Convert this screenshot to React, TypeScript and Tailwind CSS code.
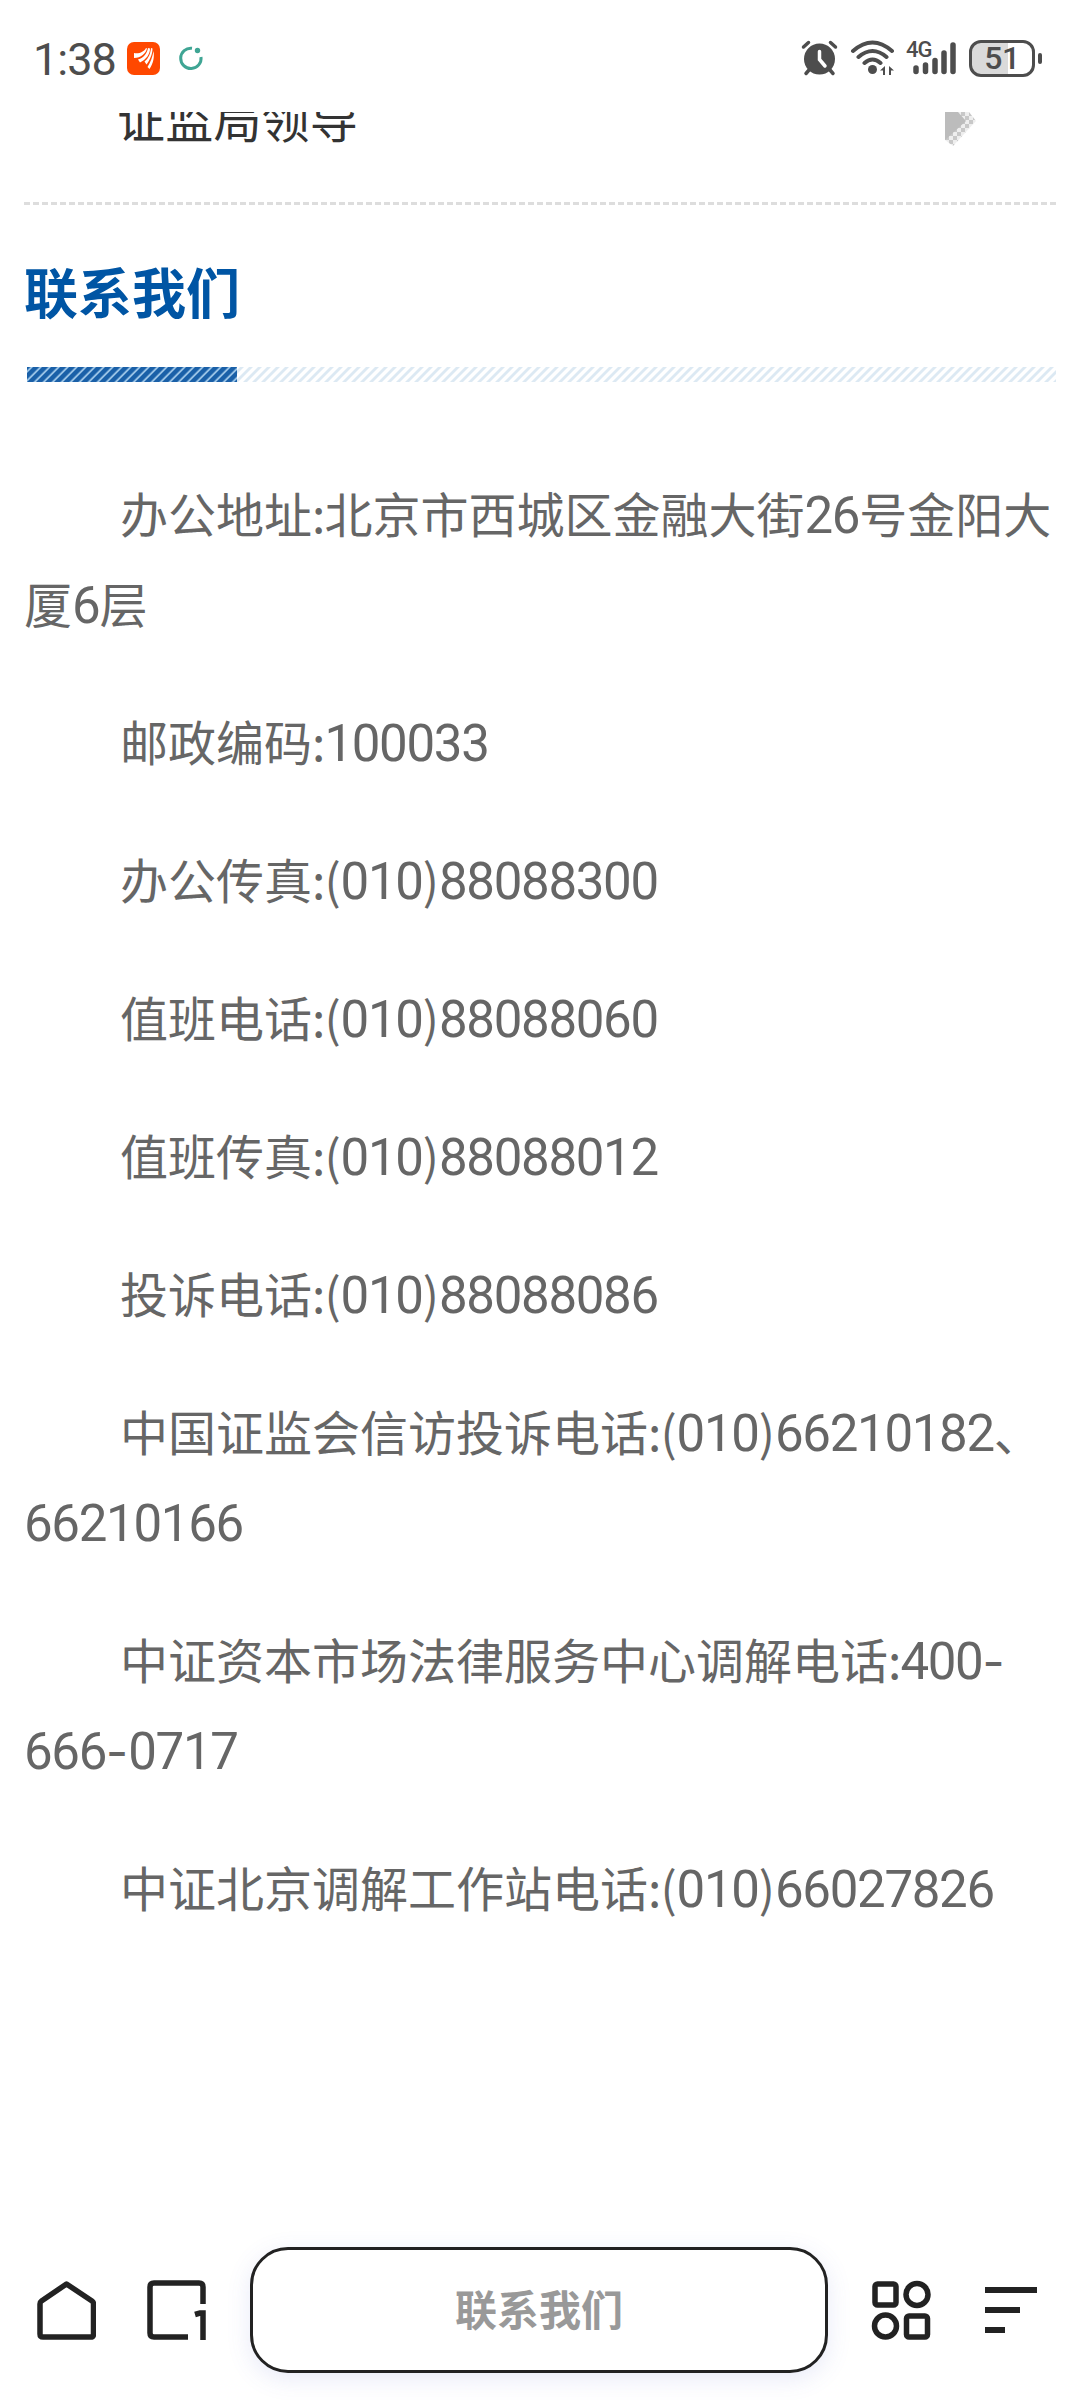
import React from "react";

const CONTACTS = [
  ["办公地址:北京市西城区金融大街26号金阳大", "厦6层"],
  ["邮政编码:100033"],
  ["办公传真:(010)88088300"],
  ["值班电话:(010)88088060"],
  ["值班传真:(010)88088012"],
  ["投诉电话:(010)88088086"],
  ["中国证监会信访投诉电话:(010)66210182、", "66210166"],
  ["中证资本市场法律服务中心调解电话:400-", "666-0717"],
  ["中证北京调解工作站电话:(010)66027826"],
];

// Digits are set in Roboto, slightly larger than the Chinese text around them
const MixedText: React.FC<{ text: string }> = ({ text }) => (
  <>
    {text.split(/([0-9]+|[-:])/).map((part, i) => {
      if (part === "-") {
        return (
          <span key={i} className="font-[Inter] leading-none">
            -
          </span>
        );
      }
      if (part === ":") {
        return (
          <span key={i} className="tracking-[-1px]">
            :
          </span>
        );
      }
      return /^[0-9]+$/.test(part) ? (
        <span key={i} className="font-[Roboto] text-[51px] leading-none tracking-[-1.3px]">
          {part}
        </span>
      ) : (
        part
      );
    })}
  </>
);

const StatusBar: React.FC = () => (
  <header className="relative z-10 flex h-28 items-center justify-between bg-white pl-[33px] pr-[38px] pt-1">
    <div className="flex items-center">
      <span className="w-[94px] pt-0.5 font-[Roboto] text-[45px] leading-none tracking-[-1px] text-[#4d4d4d]">1:38</span>
      <svg className="h-[33px] w-[33px]" viewBox="0 0 33 33">
        <rect width="33" height="33" rx="7" fill="#ff4800" />
        <path
          fill="#fff"
          d="M7 11c5 1 10-1 12-5l1 .5C19 11 14 16 7 16zM21 6l2 .5c0 6-4 11-10 14l-2-3c6-2 9-6 10-11.500zM24 6l1.500.500c0 6-3 12-6 16l-2-3c4-3 6-8 6.500-13.500zM26.500 9c1 6 0 12-4 18l-2-2c3-5 5-10 6-16z"
        />
      </svg>
      <svg className="ml-[18px] h-[26px] w-[26px]" viewBox="0 0 26 26">
        <path d="M14 3.200A10.200 10.200 0 1 0 23 12" fill="none" stroke="#3fa594" strokeWidth="3" />
        <circle cx="19.500" cy="5.500" r="2.700" fill="#3fa594" />
      </svg>
    </div>
    <div className="flex items-center text-[#4d4d4d]">
      <svg className="h-[36px] w-[37px]" viewBox="0 0 37 36" stroke="currentColor" fill="none" strokeLinecap="round">
        <circle cx="18.500" cy="19" r="15.500" fill="currentColor" stroke="none" />
        <path strokeWidth="3.500" d="M2.500 7l5-4.500M29.500 2.500l5 4.500M8 30l-3 3.500M29 30l3 3.500" />
        <path stroke="#fff" strokeWidth="3.500" d="M18.500 11.500v8l5.500 6.500" />
      </svg>
      <svg className="ml-3 h-[36px] w-[45px]" viewBox="0 0 45 36" stroke="currentColor" fill="none" strokeLinecap="round">
        <path strokeWidth="4" d="M3 11Q22.500-6 42 11M8.500 17Q22.500 5 36.500 17M14.500 23Q22.500 16 30.500 23" />
        <circle cx="22.500" cy="29.500" r="4.500" fill="currentColor" stroke="none" />
        <path d="M30 30.500l5-4.500v9h-2v-4.500zM44 30.500l-5-4.500v9h2v-4.500z" fill="currentColor" stroke="none" />
      </svg>
      <div className="relative ml-[11px] h-9 w-[52px]">
        <span className="absolute left-0 top-[-1px] font-[Roboto] text-[22px] font-medium leading-none tracking-[-1px]">4G</span>
        <svg className="h-9 w-[52px]" viewBox="0 0 52 36" stroke="currentColor" strokeWidth="5.500" strokeLinecap="round">
          <path d="M10 28v3.500M19.500 25v6.500M29 20.500v11M38 13v18.500M47 5v26.500" />
        </svg>
      </div>
      <div className="ml-[11px] flex items-center gap-[3px]">
        <div className="flex h-[37px] w-[66px] items-center justify-center rounded-[12px] border-[3px] border-[#4d4d4d] bg-linear-to-r from-[#dadada] from-60% to-white to-60%">
          <span className="font-[Roboto] text-[32px] font-medium leading-none tracking-[-0.5px]">51</span>
        </div>
        <div className="h-[11px] w-1 rounded-full bg-[#4d4d4d]" />
      </div>
    </div>
  </header>
);

const LeaderRow: React.FC = () => (
  <div className="mx-6 flex h-[90px] items-start justify-between overflow-hidden pl-[93px] pr-[80px]">
    <span className="mt-[-21px] text-[48px] leading-[52px] tracking-[0.2px] text-[#333]">证监局领导</span>
    <svg className="h-[34px] w-[31px]" viewBox="0 0 31 34">
      <defs>
        <pattern id="dots" width="8" height="8" patternUnits="userSpaceOnUse">
          <path d="M0 0h8v8H0z" fill="#eee" />
          <path d="M0 0h4v4H0zM4 4h4v4H4z" fill="#c8c8c8" />
        </pattern>
      </defs>
      <path d="M0 0h24l7 9L8 34 0 28z" fill="url(#dots)" />
      <path d="M0 0h13l8 9L0 28z" fill="#bcbcbc" />
    </svg>
  </div>
);

const SectionTitle: React.FC = () => (
  <>
    <svg className="mx-6 h-[3px] w-[1032px] shrink-0">
      <line x1="0" y1="1.5" x2="1032" y2="1.5" stroke="#ddd" strokeWidth="3" strokeDasharray="6 3" />
    </svg>
    <h2 className="mx-6 mt-[46px] text-[54px] font-bold leading-[80px] text-[#0055a4]">联系我们</h2>
    <svg className="mx-6 mt-9 h-[15px] w-[1032px] shrink-0">
      <defs>
        <pattern id="light" width="9" height="15" patternUnits="userSpaceOnUse" patternTransform="skewX(-45)">
          <path d="M0 0h4v15H0z" fill="#dce9f3" />
        </pattern>
        <pattern id="dark" width="9" height="15" patternUnits="userSpaceOnUse" patternTransform="skewX(-45)">
          <path d="M0 0h9v15H0z" fill="#a3caea" />
          <path d="M0 0h6.500v15H0z" fill="#1a60a8" />
        </pattern>
      </defs>
      <rect x="213" width="819" height="15" fill="url(#light)" />
      <rect x="3" width="210" height="15" fill="url(#dark)" />
    </svg>
  </>
);

const BottomBar: React.FC = () => (
  <nav className="flex h-[182px] items-center pt-0.5 text-[#222]">
    <svg className="ml-[37px] h-[60px] w-[59px]" viewBox="0 0 59 60" fill="none" stroke="currentColor" strokeWidth="5.500" strokeLinejoin="round">
      <path d="M29.500 4L55 21q1.500 1 1.500 3v30q0 3-3 3H6q-3 0-3-3V24q0-2 1.500-3z" />
    </svg>
    <svg className="ml-[51px] h-[60px] w-[59px]" viewBox="0 0 59 60" fill="none" stroke="currentColor" strokeWidth="5.500">
      <path d="M41 57H7q-4 0-4-4V7q0-4 4-4h45q4 0 4 4v17M48 34.500l5-1.500h3v27" />
    </svg>
    <div className="ml-[44px] flex h-[126px] w-[578px] items-center justify-center rounded-[38px] border-3 border-[#222] bg-white shadow-[0_6px_24px_rgba(80,90,200,0.13)]">
      <span className="mb-1 text-[42px] font-bold leading-none text-[#999]">联系我们</span>
    </div>
    <svg className="ml-[43px] h-[60px] w-[60px]" viewBox="0 0 60 60" fill="none" stroke="currentColor" strokeWidth="5.500">
      <rect x="4" y="4" width="21" height="21" rx="2.500" />
      <circle cx="46" cy="14.500" r="11" />
      <circle cx="14.500" cy="46" r="11" />
      <rect x="35.500" y="36" width="21" height="21" rx="2.500" />
    </svg>
    <div className="ml-[54px] flex flex-col gap-3.5">
      <div className="h-1.5 w-[52px] bg-current" />
      <div className="h-1.5 w-[35px] bg-current" />
      <div className="h-1.5 w-5 bg-current" />
    </div>
  </nav>
);

export default function App() {
  return (
    <div className="flex h-[2400px] w-[1080px] flex-col overflow-hidden bg-white font-['Noto_Sans_CJK_SC',sans-serif]">
      <StatusBar />
      <LeaderRow />
      <SectionTitle />
      <main className="mx-6 mt-[85px] flex flex-1 flex-col gap-12 text-[48px] text-[#666]">
        {CONTACTS.map((lines) => (
          <p key={lines[0]} className="indent-24 leading-[90px]">
            {lines.map((line, i) => (
              <React.Fragment key={line}>
                {i > 0 && <br />}
                <MixedText text={line} />
              </React.Fragment>
            ))}
          </p>
        ))}
      </main>
      <BottomBar />
    </div>
  );
}
